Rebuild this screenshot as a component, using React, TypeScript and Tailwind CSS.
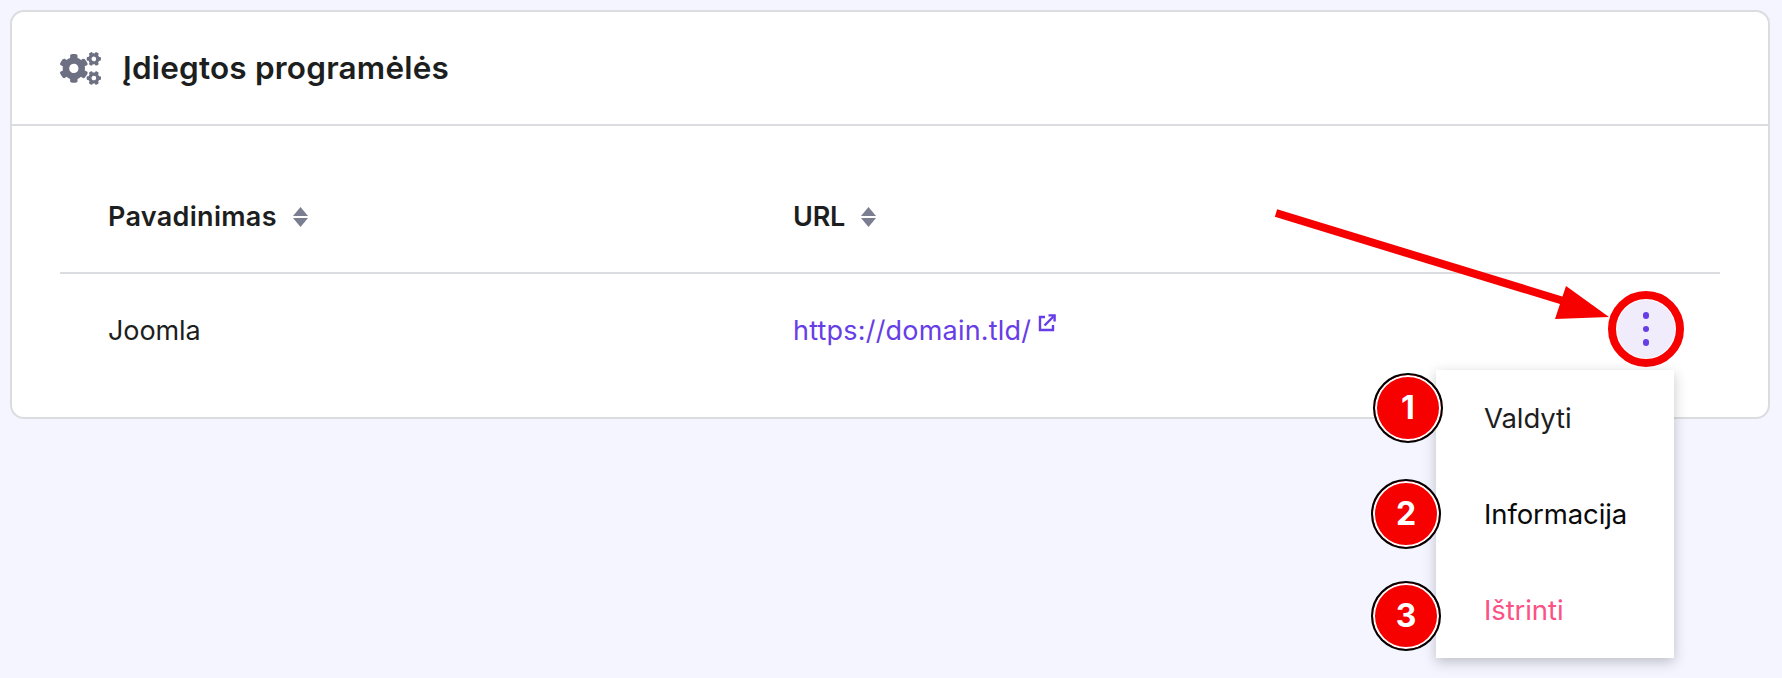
import React from 'react';
import { FaCogs } from 'react-icons/fa';

// two stacked triangles next to the sortable column names
const SortIcon = () => (
  <svg width="15" height="20" viewBox="0 0 15 20" className="shrink-0 text-[#7b7d91]" fill="currentColor">
    <path d="M7.5 0L15 9H0z" />
    <path d="M0 11H15L7.5 20z" />
  </svg>
);

const ExternalIcon = () => (
  <svg width="18" height="18" viewBox="0 0 18 18" fill="none" stroke="currentColor" strokeWidth="2.4" className="mt-[3px] shrink-0">
    <path d="M7 3H2v13h13v-5" />
    <path d="M6.5 11.5L16 2" />
    <path d="M10.5 1.4H16.6V7.5" />
  </svg>
);

const Badge = ({ n, className }: { n: number; className: string }) => (
  <div className={`absolute flex h-[70px] w-[70px] items-center justify-center rounded-full border-2 border-black bg-[#f60000] text-[32px] font-bold text-white shadow-[inset_0_0_0_2px_#fff] ${className}`}>
    {n}
  </div>
);

const menuItems = [
  { label: 'Valdyti', color: 'text-[#1d1e20]' },
  { label: 'Informacija', color: 'text-[#0a0a0a]' },
  { label: 'Ištrinti', color: 'text-[#fc5185]' },
];

export default function App() {
  return (
    <div className="relative h-[678px] overflow-hidden bg-[#f4f5ff] pl-[10px] pt-[10px] font-['Inter',sans-serif] text-[#1d1e20]">
      <div className="w-[1760px] rounded-[14px] border-2 border-[#dadce0] bg-white">
        <div className="flex h-[114px] items-center gap-[22px] border-b-2 border-[#dadce0] pl-[48px]">
          <FaCogs size={41} className="text-[#6d6f82]" />
          <h2 className="text-[31.5px] font-semibold tracking-[0.2px]">Įdiegtos programėlės</h2>
        </div>

        <div className="px-[48px]">
          <div className="grid h-[148px] grid-cols-[685px_1fr] items-center border-b-2 border-[#dadce0] pl-[48px] pt-[36px] text-[27px] font-semibold">
            <div className="flex items-center gap-[16px] tracking-[0.3px]">
              Pavadinimas
              <SortIcon />
            </div>
            <div className="flex items-center gap-[16px] tracking-[-0.2px]">
              URL
              <SortIcon />
            </div>
          </div>
          <div className="grid h-[143px] grid-cols-[685px_1fr] pl-[48px] pt-[37px] text-[27px]">
            <div className="tracking-[-0.1px]">Joomla</div>
            <div className="flex items-start gap-[7px] tracking-[0.2px] text-[#673de6]">
              https://domain.tld/
              <ExternalIcon />
            </div>
          </div>
        </div>
      </div>

      {/* row actions button */}
      <div className="absolute left-[1608px] top-[291px] flex h-[76px] w-[76px] flex-col items-center justify-center gap-[7px] rounded-full border-[8px] border-[#f60000] bg-[#f1ecfb] shadow-[inset_0_0_0_1px_#fff]">
        <span className="h-[6.5px] w-[6.5px] rounded-full bg-[#673de6]" />
        <span className="h-[6.5px] w-[6.5px] rounded-full bg-[#673de6]" />
        <span className="h-[6.5px] w-[6.5px] rounded-full bg-[#673de6]" />
      </div>

      {/* arrow annotation */}
      <svg className="absolute left-0 top-0" width="1782" height="678" fill="#f60000">
        <path d="M1276 213L1570 303" stroke="#f60000" strokeWidth="8" />
        <path d="M1566 286L1609 317L1555 319z" />
      </svg>

      {/* dropdown */}
      <div className="absolute left-[1436px] top-[370px] flex w-[238px] flex-col bg-white shadow-[0_4px_12px_rgba(29,30,32,0.25)]">
        {menuItems.map((item) => (
          <div key={item.label} className={`flex h-[96px] items-center pl-[48px] pt-[2px] text-[27.5px] tracking-[-0.1px] ${item.color}`}>
            {item.label}
          </div>
        ))}
      </div>

      <Badge n={1} className="left-[1373px] top-[373px]" />
      <Badge n={2} className="left-[1371px] top-[479px]" />
      <Badge n={3} className="left-[1371px] top-[581px]" />
    </div>
  );
}
